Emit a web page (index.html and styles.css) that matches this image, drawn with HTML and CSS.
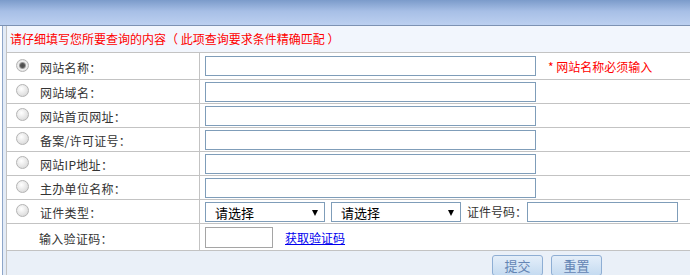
FILE: index.html
```html
<!DOCTYPE html>
<html lang="zh-CN">
<head>
    <meta charset="UTF-8">
    <title>查询</title>
    <link rel="stylesheet" href="styles.css">
</head>
<body>
    <div class="topbar"></div>
    <div class="frame">
        <div class="panel">
            <div class="notice">请仔细填写您所要查询的内容（ 此项查询要求条件精确匹配 ）</div>
            <!-- query rows -->
            <div class="row tall">
                <div class="lab"><span class="radio on"></span>网站名称：</div>
                <div class="val"><input class="txt" type="text"><span class="req">* 网站名称必须输入</span></div>
            </div>
            <div class="row">
                <div class="lab"><span class="radio"></span>网站域名：</div>
                <div class="val"><input class="txt" type="text"></div>
            </div>
            <div class="row">
                <div class="lab"><span class="radio"></span>网站首页网址：</div>
                <div class="val"><input class="txt" type="text"></div>
            </div>
            <div class="row">
                <div class="lab"><span class="radio"></span>备案/许可证号：</div>
                <div class="val"><input class="txt" type="text"></div>
            </div>
            <div class="row">
                <div class="lab"><span class="radio"></span>网站IP地址：</div>
                <div class="val"><input class="txt" type="text"></div>
            </div>
            <div class="row">
                <div class="lab"><span class="radio"></span>主办单位名称：</div>
                <div class="val"><input class="txt" type="text"></div>
            </div>
            <div class="row">
                <div class="lab"><span class="radio"></span>证件类型：</div>
                <div class="val">
                    <span class="sel w1"><select><option>请选择</option></select></span>
                    <span class="sel w2"><select><option>请选择</option></select></span>
                    <span class="cap">证件号码：</span>
                    <input class="txt short" type="text">
                </div>
            </div>
            <div class="row tall">
                <div class="lab plain">输入验证码：</div>
                <div class="val"><input class="code" type="text"><a class="link" href="#">获取验证码</a></div>
            </div>
            <div class="actions">
                <button class="btn">提交</button>
                <button class="btn">重置</button>
            </div>
        </div>
    </div>
</body>
</html>
```

FILE: styles.css
```css
body {
    margin: 0;
    font-family: "Noto Sans CJK SC", "Liberation Sans", sans-serif;
    font-size: 12px;
    color: #333;
    background: #fff;
    overflow: hidden;
}
.topbar {
    height: 25px;
    background: linear-gradient(#7b9bca, #a7bfe6 45%, #bcd0f0);
    border-bottom: 1px solid #7d92b3;
}
.frame {
    margin-left: 2px;
    border-left: 1px solid #8ea6c9;
    padding-left: 3px;
    background: #e3ebf6;
}
.panel {
    border-left: 1px solid #c3c3c3;
    background: #fff;
}
.notice {
    height: 26px;
    line-height: 26px;
    padding-left: 3px;
    color: #f00;
    background: #f2f6fd;
    border-bottom: 1px solid #c3c3c3;
}
.row {
    display: flex;
    height: 24px;
    box-sizing: border-box;
    border-bottom: 1px solid #c3c3c3;
}
.row.tall {
    height: 27px;
}
.lab {
    width: 193px;
    border-right: 1px solid #c3c3c3;
    display: flex;
    align-items: center;
    padding-top: 2px;
    box-sizing: border-box;
    letter-spacing: 0.3px;
}
.lab.plain {
    padding-left: 32px;
}
.radio {
    width: 11px;
    height: 11px;
    border: 1px solid #b4b4b4;
    border-radius: 50%;
    background: radial-gradient(circle at 40% 35%, #ffffff, #e6e6e6 55%, #cfcfcf);
    margin: 0 11px 0 9px;
    position: relative;
    top: -2px;
}
.radio.on {
    background: radial-gradient(circle, #4a4a4a 0, #555 2px, #9a9a9a 3px, #eee 4px, #d4d4d4);
}
.val {
    flex: 1;
    display: flex;
    align-items: center;
    padding-left: 5px;
}
.txt {
    width: 331px;
    height: 20px;
    box-sizing: border-box;
    border: 1px solid #7f9db9;
    padding: 0 3px;
    margin: 0;
    font: inherit;
}
.txt.short {
    width: 151px;
}
.req {
    color: #f00;
    margin-left: 12px;
}
.sel {
    position: relative;
    display: inline-block;
    margin-right: 6px;
}
.sel select {
    appearance: none;
    height: 20px;
    box-sizing: border-box;
    border: 1px solid #7f9db9;
    border-radius: 0;
    background: #fff;
    padding: 0 0 0 9px;
    font: inherit;
    font-size: 13px;
    color: #000;
    display: block;
}
.sel.w1 select {
    width: 120px;
}
.sel.w2 select {
    width: 130px;
}
.sel::after {
    content: "";
    position: absolute;
    right: 7px;
    top: 8px;
    border-left: 3px solid transparent;
    border-right: 3px solid transparent;
    border-top: 6px solid #000;
}
.cap {
    margin-right: 0;
}
.code {
    width: 68px;
    height: 21px;
    box-sizing: border-box;
    border: 1px solid #a5a5a5;
    margin: 0;
    padding: 0 2px;
}
.link {
    color: #0000ee;
    margin-left: 12px;
}
.actions {
    height: 30px;
    background: #eaf0f8;
    padding: 4px 0 0 485px;
    display: flex;
    gap: 8px;
}
.btn {
    width: 51px;
    height: 21px;
    border: 1px solid #8eaed4;
    border-radius: 3px;
    background: linear-gradient(#e4eef9, #c5dbf1);
    color: #6485b4;
    font: inherit;
    font-size: 13px;
    padding: 0;
}
```
